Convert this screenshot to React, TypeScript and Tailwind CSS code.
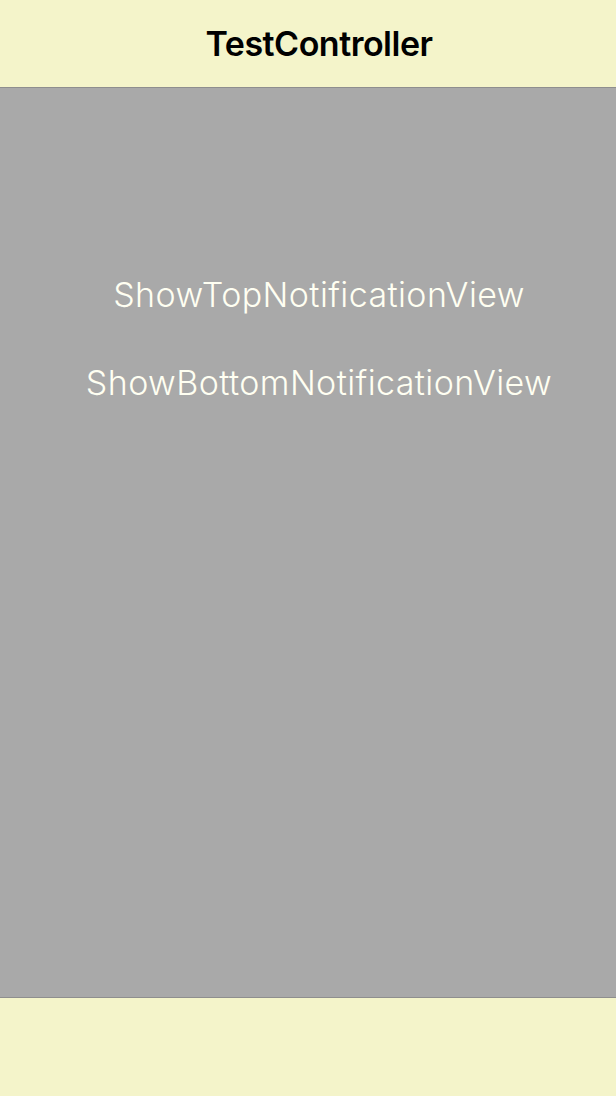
export default function App() {
  return (
    <div
      className="flex flex-col h-[1096px] w-full bg-[#a9a9a9] text-black"
      style={{ fontFamily: "Inter, 'Noto Sans', sans-serif" }}
    >
      <header className="flex h-[88px] items-center justify-center border-b border-[#8e8e8e] bg-[#f4f4ca] pl-[22px]">
        <h1 className="text-[34px] font-semibold tracking-[-0.5px]">TestController</h1>
      </header>
      <main className="flex flex-1 flex-col items-center pt-[181px] pl-[22px]">
        <button className="h-[50px] text-[34px] font-light tracking-[0.4px] text-[#fffff2]">
          ShowTopNotificationView
        </button>
        <button className="mt-[38px] h-[50px] text-[34px] font-light tracking-[0.4px] text-[#fffff2]">
          ShowBottomNotificationView
        </button>
      </main>
      <footer className="h-[99px] border-t border-[#8e8e8e] bg-[#f4f4ca]" />
    </div>
  );
}
